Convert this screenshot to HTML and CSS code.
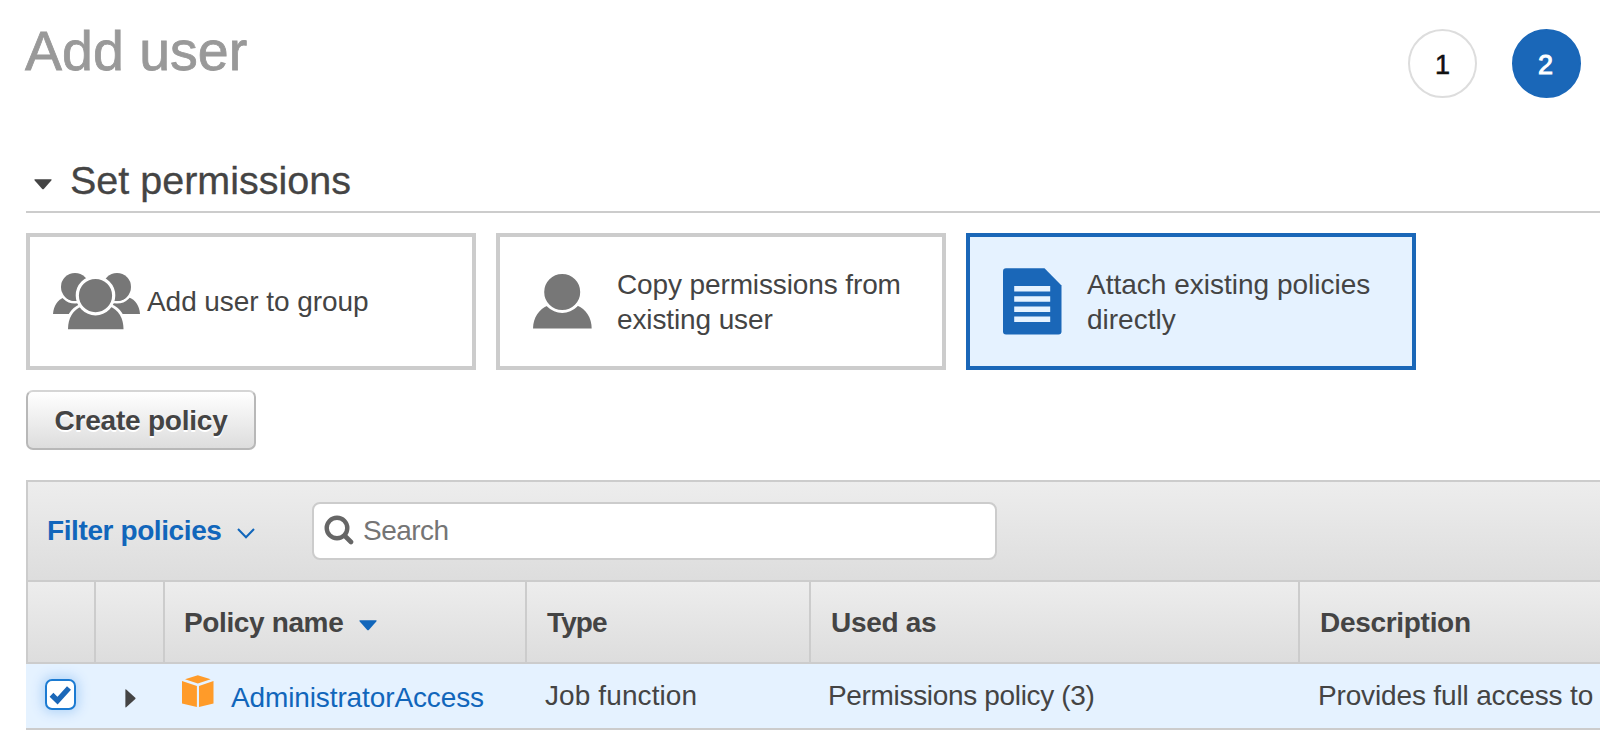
FILE: index.html
```html
<!DOCTYPE html>
<html lang="en">
<head>
<meta charset="utf-8">
<title>Add user</title>
<link rel="stylesheet" href="styles.css">
</head>
<body>
<header class="page-header">
  <h1 class="page-title">Add user</h1>
  <ol class="steps">
    <li class="step">1</li>
    <li class="step step-active">2</li>
  </ol>
</header>

<main class="content">
  <h2 class="section-title">
    <svg class="section-caret" width="18" height="11" viewBox="0 0 18 11"><path d="M1 .3H17Q18.200 .6 17.300 1.600L10 9.700Q9 10.700 8 9.700L.7 1.600Q-.2 .6 1 .3Z" fill="#444"/></svg>
    <span class="section-text">Set permissions</span>
  </h2>

  <div class="cards">
    <div class="card card-group">
      <svg class="card-icon" width="88" height="57" viewBox="0 0 88 57" fill="#777">
        <path d="M0 41C.6 33 4.700 26.500 11 24.500L32 24.500V41Z"/>
        <path d="M87 41C86.400 33 82.300 26.500 76 24.500L55 24.500V41Z"/>
        <circle cx="22" cy="14" r="15.300" fill="none" stroke="#fff" stroke-width="2.600"/>
        <circle cx="64" cy="14" r="15.300" fill="none" stroke="#fff" stroke-width="2.600"/>
        <circle cx="22" cy="14" r="14"/>
        <circle cx="64" cy="14" r="14"/>
        <path d="M15 56.300C15 45 20 37 28.500 33.500L57 33.500C65.500 37 70.500 45 70.500 56.300Z" stroke="#fff" stroke-width="5.500"/>
        <path d="M15 56.300C15 45 20 37 28.500 33.500L57 33.500C65.500 37 70.500 45 70.500 56.300Z"/>
        <circle cx="42.500" cy="22.600" r="18.200" stroke="#fff" stroke-width="3.200"/>
      </svg>
      <span class="card-label">Add user to group</span>
    </div>
    <div class="card">
      <svg class="card-icon" width="59" height="67" viewBox="0 0 59 67" fill="#777">
        <path d="M0 60.500C.2 49.500 6 41 15 37.500H44C53 41 58.500 49.500 58.700 60.500Z"/>
        <circle cx="29.200" cy="24" r="19.500" stroke="#fff" stroke-width="3"/>
      </svg>
      <span class="card-label label-copy">Copy permissions from<br>existing user</span>
    </div>
    <div class="card card-selected">
      <svg class="card-icon" width="59" height="67" viewBox="0 0 59 67">
        <path d="M3 .3H41.500L58.500 17.500V63.500Q58.500 66.500 55.500 66.500H3Q0 66.500 0 63.500V3.300Q0 .3 3 .3Z" fill="#1a67b8"/>
        <path d="M11.200 20.800h36M11.200 31h36M11.200 41.200h36M11.200 51.300h36" stroke="#e5f2ff" stroke-width="5.600"/>
      </svg>
      <span class="card-label">Attach existing policies<br>directly</span>
    </div>
  </div>

  <button class="create-button" type="button">Create policy</button>

  <section class="policies">
    <div class="toolbar">
      <span class="filter">Filter policies</span>
      <svg class="filter-chevron" width="18" height="11" viewBox="0 0 18 11"><path d="M1 1L9 9.300L17 1" fill="none" stroke="#1166bb" stroke-width="2"/></svg>
      <div class="search">
        <svg width="30" height="30" viewBox="0 0 30 30" fill="none" stroke="#666"><circle cx="13" cy="13" r="10.300" stroke-width="4.400"/><path d="M20.500 20.500L27 27" stroke-width="4.600" stroke-linecap="round"/></svg>
        <span class="search-text">Search</span>
      </div>
    </div>
    <div class="grid table-head">
      <div class="th"></div>
      <div class="th"></div>
      <div class="th th-policy">Policy name
        <svg class="sort-caret" width="18" height="11" viewBox="0 0 18 11"><path d="M1 .3H17Q18.200 .6 17.300 1.600L10 9.700Q9 10.700 8 9.700L.7 1.600Q-.2 .6 1 .3Z" fill="#1166bb"/></svg>
      </div>
      <div class="th th-type">Type</div>
      <div class="th">Used as</div>
      <div class="th">Description</div>
    </div>
    <div class="grid table-row">
      <div class="td td-check"><span class="checkbox"><svg width="23" height="20" viewBox="0 0 23 20"><path d="M2.500 9.800L8.500 15.700L20 3" fill="none" stroke="#1a67b8" stroke-width="5.400"/></svg></span></div>
      <div class="td td-expand"><svg width="11" height="19" viewBox="0 0 11 19"><path d="M.4 .6Q.4 0 1.200 .6L10.300 8.800Q10.800 9.400 10.300 10L1.200 18.300Q.4 18.800 .4 18Z" fill="#444"/></svg></div>
      <div class="td td-name">
        <svg class="cube" width="32" height="33" viewBox="0 0 32 33" fill="#ff9b29"><path d="M15.800 .3L28.700 4.300L15.800 8.500L3 4.300Z"/><path d="M0 6L14.900 10.900V32L0 28.400Z"/><path d="M31.500 6L17 10.900V32L31.500 28.400Z"/></svg>
        <a class="policy-link">AdministratorAccess</a>
      </div>
      <div class="td td-type">Job function</div>
      <div class="td td-used">Permissions policy (3)</div>
      <div class="td td-description">Provides full access to</div>
    </div>
  </section>
</main>
</body>
</html>
```

FILE: styles.css
```css
* { box-sizing: border-box; }

body {
  margin: 0;
  height: 742px;
  overflow: hidden;
  background: #fff;
  color: #444;
  font: 28px/35px "Liberation Sans", Arial, sans-serif;
}

svg { display: block; flex: none; }

.page-header {
  display: flex;
  justify-content: space-between;
  height: 155px;
  padding: 21px 19px 0 25px;
}

.page-title {
  margin: 0;
  color: #999;
  font-size: 55.5px;
  font-weight: 400;
  line-height: 61px;
  -webkit-text-stroke: .8px currentColor;
}

.steps {
  display: flex;
  gap: 35px;
  margin: 8px 0 0;
  padding: 0;
  list-style: none;
}

.step {
  width: 69px;
  height: 69px;
  border: 2px solid #ddd;
  border-radius: 50%;
  color: #111;
  font-size: 27px;
  line-height: 68px;
  text-align: center;
  -webkit-text-stroke: .6px currentColor;
}

.step-active {
  padding-right: 2px;
  border-color: #1a67b8;
  background: #1a67b8;
  color: #fff;
  -webkit-text-stroke-width: 1px;
}

.content { padding-left: 26px; }

.section-title {
  display: flex;
  height: 58px;
  margin: 0 0 20px;
  padding-left: 8px;
  border-bottom: 2px solid #ccc;
  font-size: 39.5px;
  font-weight: 400;
  line-height: 50px;
  -webkit-text-stroke: .3px currentColor;
}

.section-caret { margin: 24px 18px 0 0; }

.cards { display: flex; gap: 20px; }

.card {
  display: flex;
  align-items: center;
  gap: 25px;
  width: 450px;
  height: 137px;
  padding-left: 33px;
  border: 4px solid #ccc;
}

.card-group { gap: 6px; padding-left: 23px; }

.card-group .card-label { letter-spacing: -.06px; }

.label-copy { letter-spacing: -.12px; }

.card-selected { border-color: #1a67b8; background: #e5f2ff; }

.create-button {
  display: block;
  width: 230px;
  height: 60px;
  margin: 20px 0 30px;
  padding: 1px 0 0;
  border: 2px solid #b8b8b8;
  border-top-color: #d5d5d5;
  border-radius: 7px;
  background: linear-gradient(#fff, #ddd);
  color: #444;
  font: bold 28px/35px "Liberation Sans", Arial, sans-serif;
  letter-spacing: -.22px;
  text-shadow: 0 2px 0 #fff;
}

.toolbar {
  display: flex;
  align-items: center;
  height: 101px;
  padding-left: 19px;
  border: solid #ccc;
  border-width: 2px 0 1px 2px;
  background: linear-gradient(#ededed, #ddd);
}

.filter {
  width: 190px;
  margin-bottom: 2px;
  color: #1166bb;
  font-weight: 700;
  letter-spacing: -.4px;
  white-space: nowrap;
}

.filter-chevron { margin-top: 4px; }

.search {
  display: flex;
  align-items: center;
  gap: 9px;
  width: 685px;
  height: 58px;
  margin-left: 57px;
  padding-left: 10px;
  border: 2px solid #ccc;
  border-radius: 8px;
  background: #fff;
  color: #757575;
}

.search svg { margin-bottom: 3px; }

.search-text { margin-bottom: 2px; letter-spacing: -.55px; }

.grid {
  display: grid;
  grid-template-columns: 68px 69px 362px 284px 489px 1fr;
}

.table-head {
  height: 83px;
  border: solid #ccc;
  border-width: 1px 0 2px 2px;
  background: linear-gradient(#ededed, #ddd);
  font-weight: 700;
  letter-spacing: -.3px;
}

.th {
  display: flex;
  align-items: center;
  padding: 1px 0 0 20px;
  border-right: 2px solid #ccc;
  white-space: nowrap;
}

.th:last-child { border-right: 0; }

.th-policy { padding-left: 19px; letter-spacing: -.37px; }

.th-type { letter-spacing: -.9px; }

.sort-caret { margin: 5px 0 0 16px; }

.table-row {
  height: 66px;
  padding-left: 2px;
  border-bottom: 2px solid #ccc;
  background: #e5f2ff;
}

.td {
  display: flex;
  align-items: center;
  padding: 0 0 2px 17px;
  white-space: nowrap;
}

.td-expand { padding: 5px 0 0 29px; }

.td-name { padding-bottom: 0; }

.td-type { padding-left: 18px; letter-spacing: .1px; }

.td-used { letter-spacing: -.33px; }

.td-description { padding-left: 18px; letter-spacing: -.15px; }

.checkbox {
  display: grid;
  place-items: center;
  width: 31px;
  height: 31px;
  border: 2px solid #1c7bd2;
  border-radius: 7px;
  background: #fff;
  box-shadow: 0 0 12px 3px #b4d5f8;
}

.td-check { padding-bottom: 3px; }

.cube { margin-bottom: 9px; }

.policy-link { margin: 3px 0 0 17px; color: #1166bb; letter-spacing: -.12px; }
```
